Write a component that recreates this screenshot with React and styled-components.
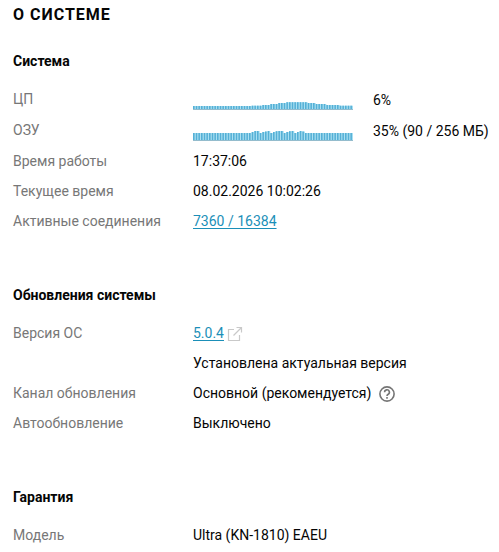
import React from "react";
import styled, { createGlobalStyle } from "styled-components";

const GlobalStyle = createGlobalStyle`
  * { box-sizing: border-box; }
  body { margin: 0; background: #fff; overflow: hidden; }
`;

const Page = styled.main`
  width: 499px;
  height: 552px;
  padding: 5px 0 0 13px;
  overflow: hidden;
  background: #fff;
  color: #050505;
  font: 400 14px/20px Roboto, "Noto Sans", sans-serif;
`;

const Title = styled.h1`
  margin: 0;
  font-size: 16px;
  font-weight: 700;
  line-height: 20px;
  letter-spacing: 1px;
`;

const Section = styled.section`
  padding-top: ${({ $gap }) => $gap}px;
`;

const Heading = styled.h2`
  margin: 0 0 ${({ $space }) => $space}px;
  font-size: 14px;
  font-weight: 700;
  line-height: 20px;
`;

const Row = styled.div`
  display: grid;
  grid-template-columns: 180px 1fr;
  height: ${({ $height }) => $height || 30}px;
`;

const Label = styled.span`
  color: #777;
`;

const Value = styled.div`
  display: flex;
  white-space: nowrap;
`;

const Link = styled.a`
  color: #1b8fb8;
  text-decoration: underline;
  text-decoration-thickness: 1px;
  text-underline-offset: 2px;
`;

const Chart = styled.svg`
  display: block;
  flex: none;
  width: 160px;
  height: 21px;
  margin-right: 20px;
`;

const Reading = styled.span`
  padding-top: ${({ $drop }) => $drop}px;
`;

const Icon = styled.svg`
  flex: none;
  width: ${({ $size }) => $size}px;
  height: ${({ $size }) => $size}px;
  margin: 3px 0 0 ${({ $gap }) => $gap}px;
`;

const cpu = Array.from({ length: 60 }, (_, i) => {
  if (i < 22) return 4;
  if (i < 26) return 4.3;
  if (i < 29) return 5;
  if (i < 32) return 6;
  if (i < 35) return 7;
  if (i < 43) return 7.8;
  if (i < 46) return 7;
  if (i < 50) return 6;
  if (i < 55) return 5;
  return 4.3;
});

const raised = { 22: 9, 23: 10, 24: 10, 26: 9, 27: 9.5, 28: 10, 30: 9, 31: 9.8, 32: 10, 33: 10, 35: 9, 36: 9.8, 37: 10, 39: 9, 40: 10, 41: 9.5 };
const ram = Array.from({ length: 60 }, (_, i) => raised[i] || 8);

function History({ values, base }) {
  const step = 160 / values.length;
  return (
    <Chart viewBox="0 0 160 21" aria-hidden="true">
      {values.map((v, i) => (
        <g key={i}>
          <rect x={i * step} y={base - v} width={step} height={v} fill="#a9e0f3" />
          <rect x={i * step} y={base - v} width="1.6" height={v} fill="#55b0d6" />
        </g>
      ))}
      <rect x="0" y={base - 1} width="160" height="1" fill="#94bccd" />
    </Chart>
  );
}

export default function App() {
  return (
    <>
      <GlobalStyle />
      <Page>
        <Title>О СИСТЕМЕ</Title>
        <Section $gap={26}>
          <Heading $space={18}>Система</Heading>
          <Row $height={31}>
            <Label>ЦП</Label>
            <Value><History values={cpu} base={21} /><Reading $drop={1}>6%</Reading></Value>
          </Row>
          <Row $height={31}>
            <Label>ОЗУ</Label>
            <Value><History values={ram} base={21} /><Reading $drop={1}>35% (90 / 256 МБ)</Reading></Value>
          </Row>
          <Row><Label>Время работы</Label><Value>17:37:06</Value></Row>
          <Row><Label>Текущее время</Label><Value>08.02.2026 10:02:26</Value></Row>
          <Row><Label>Активные соединения</Label><Value><Link>7360 / 16384</Link></Value></Row>
        </Section>
        <Section $gap={44}>
          <Heading $space={18}>Обновления системы</Heading>
          <Row>
            <Label>Версия ОС</Label>
            <Value>
              <Link>5.0.4</Link>
              <Icon $size={16} $gap={3} viewBox="0 0 16 16" fill="none" stroke="#c9c9c9" strokeWidth="1.2">
                <path d="M7 3.5H1.5v11h11V9M9.5 1.5h5v5M14.5 1.5L6.5 9.5" />
              </Icon>
            </Value>
          </Row>
          <Row><span /><Value>Установлена актуальная версия</Value></Row>
          <Row>
            <Label>Канал обновления</Label>
            <Value>
              Основной (рекомендуется)
              <Icon $size={16} $gap={8} viewBox="0 0 16 16" fill="none" stroke="#757575" strokeWidth="1.6">
                <circle cx="8" cy="8" r="7.1" />
                <path d="M5.6 6.3a2.4 2.4 0 1 1 3.6 2C8.3 8.8 8 9.2 8 10M8 11.1v1.6" />
              </Icon>
            </Value>
          </Row>
          <Row><Label>Автообновление</Label><Value>Выключено</Value></Row>
        </Section>
        <Section $gap={44}>
          <Heading $space={18}>Гарантия</Heading>
          <Row><Label>Модель</Label><Value>Ultra (KN-1810) EAEU</Value></Row>
        </Section>
      </Page>
    </>
  );
}
